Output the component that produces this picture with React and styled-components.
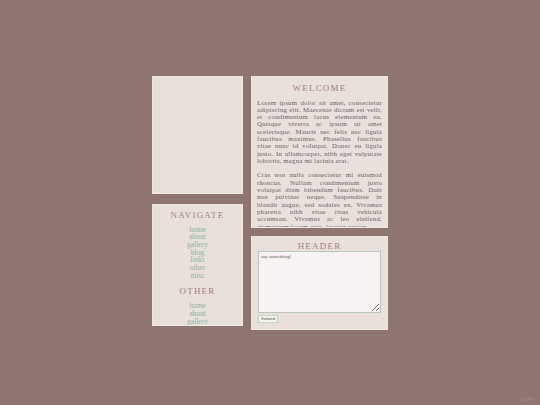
import styled, { createGlobalStyle } from "styled-components"

const GlobalStyle = createGlobalStyle`
   html, body {
      margin: 0;
      padding: 0;
      background: #8e7570;
      font-family: "Liberation Serif", "DejaVu Serif", serif;
   }
`

const Page = styled.div`
   width: 540px;
   height: 405px;
   display: flex;
   justify-content: center;
   align-items: center;
   position: relative;
`
const Layout = styled.div`
   display: flex;
   gap: 8px;
   align-items: flex-start;
`
const Column = styled.div`
   display: flex;
   flex-direction: column;
   gap: ${(p) => p.$gap}px;
   width: ${(p) => p.$width}px;
`
const Panel = styled.div`
   box-sizing: border-box;
   height: ${(p) => p.$height}px;
   background: #e9e0dc;
   border: 1px solid #efe7e4;
   padding: ${(p) => p.$pad || "0"};
   overflow: hidden;
`
const Title = styled.h2`
   margin: 0 0 ${(p) => p.$after || 0}px;
   font-weight: normal;
   font-size: 9px;
   line-height: 10px;
   letter-spacing: 1.2px;
   text-align: center;
   color: #a57d84;
`
const Para = styled.p`
   margin: 0 0 7.3px;
   font-size: 6.8px;
   line-height: 7.3px;
   letter-spacing: 0.22px;
   text-align: justify;
   color: #6b6166;
`
const LinkList = styled.ul`
   list-style: none;
   margin: 0 0 ${(p) => p.$after || 0}px;
   padding: 0;
   text-align: center;
`
const LinkItem = styled.li`
   font-size: 7.5px;
   line-height: 7.7px;
   color: #8db1a1;
`
const TextBox = styled.textarea`
   box-sizing: border-box;
   display: block;
   width: 123px;
   height: 62px;
   margin: 0;
   padding: 2px;
   background: #f7f3f2;
   border: 1px solid #b9c6bc;
   font-family: "Liberation Serif", serif;
   font-size: 5px;
   color: #5e5458;
   resize: both;
   &::placeholder {
      color: #5e5458;
   }
`
const Submit = styled.button`
   display: block;
   margin-top: 2px;
   padding: 0 2px;
   height: 8px;
   background: #f2f5ea;
   border: 1px solid #c8d5c0;
   font-family: "Liberation Serif", serif;
   font-size: 5px;
   line-height: 6px;
   color: #5e5458;
`
const Mark = styled.span`
   position: absolute;
   right: 6px;
   bottom: 3px;
   font-family: "Liberation Sans", sans-serif;
   font-size: 5px;
   color: #a38d88;
`

const nav = ["home", "about", "gallery", "blog", "links", "other", "misc"]
const other = ["home", "about", "gallery"]

export default function App() {
   return (
      <>
         <GlobalStyle />
         <Page>
            <Layout>
               <Column $width={91} $gap={10}>
                  <Panel $height={118} />
                  <Panel $height={122} $pad="5px 4px 0">
                     <Title $after={6}>NAVIGATE</Title>
                     <LinkList $after={7}>
                        {nav.map((n) => (
                           <LinkItem key={n}>{n}</LinkItem>
                        ))}
                     </LinkList>
                     <Title $after={6}>OTHER</Title>
                     <LinkList>
                        {other.map((n) => (
                           <LinkItem key={n}>{n}</LinkItem>
                        ))}
                     </LinkList>
                  </Panel>
               </Column>
               <Column $width={137} $gap={8}>
                  <Panel $height={152} $pad="6px 5px 0">
                     <Title $after={6}>WELCOME</Title>
                     <Para>
                        Lorem ipsum dolor sit amet, consectetur adipiscing elit. Maecenas dictum est velit,
                        et condimentum lacus elementum eu. Quisque viverra ac ipsum sit amet scelerisque.
                        Mauris nec felis nec ligula faucibus maximus. Phasellus faucibus vitae nunc id
                        volutpat. Donec eu ligula justo. In ullamcorper, nibh eget vulputate lobortis,
                        magna mi lacinia erat.
                     </Para>
                     <Para>
                        Cras non nulla consectetur mi euismod rhoncus. Nullam condimentum justo volutpat
                        diam bibendum faucibus. Duis non pulvinar neque. Suspendisse in blandit augue, sed
                        sodales ex. Vivamus pharetra nibh vitae risus vehicula accumsan. Vivamus ac leo
                        eleifend, elementum lorem quis, laoreet sapien.
                     </Para>
                  </Panel>
                  <Panel $height={94} $pad="4px 6px 0">
                     <Title>HEADER</Title>
                     <TextBox placeholder="say something!" />
                     <Submit>Submit</Submit>
                  </Panel>
               </Column>
            </Layout>
            <Mark>Cmyke</Mark>
         </Page>
      </>
   )
}
